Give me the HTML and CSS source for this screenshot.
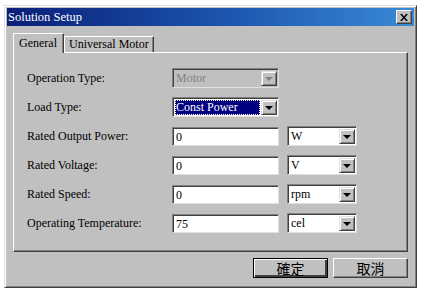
FILE: index.html
```html
<!DOCTYPE html>
<html lang="zh-Hant">
<head>
    <meta charset="UTF-8">
    <title>Solution Setup</title>
    <link rel="stylesheet" href="styles.css">
</head>
<body>
    <div class="dialog">
        <div class="titlebar">
            <span class="title">Solution Setup</span>
            <button class="close-btn">
                <svg width="8" height="7" viewBox="0 0 8 7"><path d="M0 0h2l2 2.5 2-2.5h2l-3 3.5 3 3.5h-2l-2-2.5-2 2.5h-2l3-3.5z" fill="#000"/></svg>
            </button>
        </div>

        <div class="dialog-body">
            <!-- Tabs -->
            <div class="tabs">
                <div class="tab active">General</div>
                <div class="tab">Universal Motor</div>
            </div>

            <div class="tab-panel">
                <div class="form-grid">
                    <label>Operation Type:</label>
                    <div class="combo disabled wide">
                        <span class="combo-text">Motor</span>
                        <span class="combo-btn"><i class="arrow"></i></span>
                    </div>
                    <span></span>

                    <label>Load Type:</label>
                    <div class="combo wide">
                        <span class="combo-text selected">Const Power</span>
                        <span class="combo-btn"><i class="arrow"></i></span>
                    </div>
                    <span></span>

                    <label>Rated Output Power:</label>
                    <div class="field">0</div>
                    <div class="combo">
                        <span class="combo-text">W</span>
                        <span class="combo-btn"><i class="arrow"></i></span>
                    </div>

                    <label>Rated Voltage:</label>
                    <div class="field">0</div>
                    <div class="combo">
                        <span class="combo-text">V</span>
                        <span class="combo-btn"><i class="arrow"></i></span>
                    </div>

                    <label>Rated Speed:</label>
                    <div class="field">0</div>
                    <div class="combo">
                        <span class="combo-text">rpm</span>
                        <span class="combo-btn"><i class="arrow"></i></span>
                    </div>

                    <label>Operating Temperature:</label>
                    <div class="field">75</div>
                    <div class="combo">
                        <span class="combo-text">cel</span>
                        <span class="combo-btn"><i class="arrow"></i></span>
                    </div>
                </div>
            </div>

            <div class="buttons">
                <button class="btn default">確定</button>
                <button class="btn">取消</button>
            </div>
        </div>
    </div>
</body>
</html>
```

FILE: styles.css
```css
* {
    margin: 0;
    padding: 0;
    box-sizing: border-box;
}

body {
    background: #fff;
    font-family: 'Liberation Serif', 'DejaVu Serif', serif;
    font-size: 12px;
    color: #000;
}

label,
button,
.tab,
.field,
.combo-text {
    font-family: 'Liberation Serif', 'DejaVu Serif', serif;
}

/* Dialog frame */
.dialog {
    margin: 5px 0 0 4px;
    width: 413px;
    height: 283px;
    padding: 2px;
    background: #c0c0c0;
    border: 1px solid;
    border-color: #dfdfdf #404040 #404040 #dfdfdf;
    box-shadow: inset 1px 1px #fff, inset -1px -1px #808080;
}

.titlebar {
    height: 18px;
    display: flex;
    align-items: center;
    justify-content: space-between;
    padding: 0 2px 0 1px;
    background: linear-gradient(90deg, #0a1f78 0%, #1c56b0 55%, #3a8ad6 100%);
    color: #fff;
}

.title {
    font-size: 12.5px;
}

.close-btn {
    width: 16px;
    height: 14px;
    display: flex;
    align-items: center;
    justify-content: center;
    background: #c0c0c0;
    border: 1px solid;
    border-color: #fff #404040 #404040 #fff;
    box-shadow: inset -1px -1px #808080;
}

.dialog-body {
    padding: 7px 6px 0 6px;
}

/* Tabs */
.tabs {
    display: flex;
    height: 19px;
    align-items: flex-start;
    position: relative;
    z-index: 1;
}

.tab {
    height: 16px;
    margin-top: 3px;
    padding: 0 4px;
    line-height: 15px;
    border: 1px solid;
    border-bottom: none;
    border-color: #fff #404040 #fff #fff;
    box-shadow: inset -1px 0 #808080;
    background: #c0c0c0;
}

.tab.active {
    height: 20px;
    margin-top: 0;
    padding: 0 6px 0 5px;
    line-height: 19px;
}

.tab-panel {
    height: 200px;
    border: 1px solid;
    border-color: #fff #404040 #404040 #fff;
    box-shadow: inset -1px -1px #808080;
    padding: 15px 0 0 13px;
}

/* Form */
.form-grid {
    display: grid;
    grid-template-columns: 137px 107px 70px;
    grid-auto-rows: 20px;
    column-gap: 8px;
    row-gap: 9px;
    align-items: center;
}

.form-grid label {
    white-space: nowrap;
}

.field {
    height: 19px;
    background: #fff;
    border: 1px solid;
    border-color: #808080 #dfdfdf #dfdfdf #808080;
    box-shadow: inset 1px 1px #404040;
    padding: 1px 0 0 3px;
    line-height: 16px;
}

.combo {
    height: 20px;
    display: flex;
    align-items: stretch;
    background: #fff;
    border: 1px solid;
    border-color: #808080 #dfdfdf #dfdfdf #808080;
    box-shadow: inset 1px 1px #404040;
    padding: 2px 1px 1px 2px;
}

.combo-text {
    flex: 1;
    padding-left: 1px;
    line-height: 14px;
}

.combo-text.selected {
    background: #000080;
    color: #fff;
    outline: 1px dotted #fff;
    outline-offset: -1px;
    margin-right: 1px;
}

.combo-btn {
    width: 16px;
    display: flex;
    align-items: center;
    justify-content: center;
    background: #c0c0c0;
    border: 1px solid;
    border-color: #dfdfdf #404040 #404040 #dfdfdf;
    box-shadow: inset 1px 1px #fff, inset -1px -1px #808080;
}

.arrow {
    width: 0;
    height: 0;
    border-left: 4px solid transparent;
    border-right: 4px solid transparent;
    border-top: 4px solid #000;
    margin-top: 1px;
}

.combo.disabled {
    background: #c0c0c0;
    color: #808080;
}

.combo.disabled .arrow {
    border-top-color: #808080;
}

/* Buttons */
.buttons {
    display: flex;
    justify-content: flex-end;
    gap: 5px;
    margin-top: 6px;
}

.btn {
    width: 75px;
    height: 20px;
    background: #c0c0c0;
    font-family: 'Noto Sans CJK TC', sans-serif;
    font-size: 14px;
    line-height: 16px;
    color: #000;
    border: 1px solid;
    border-color: #fff #404040 #404040 #fff;
    box-shadow: inset -1px -1px #808080;
}

.btn.default {
    border-color: #000;
    box-shadow: inset 1px 1px #fff, inset -2px -2px #404040;
}
```
